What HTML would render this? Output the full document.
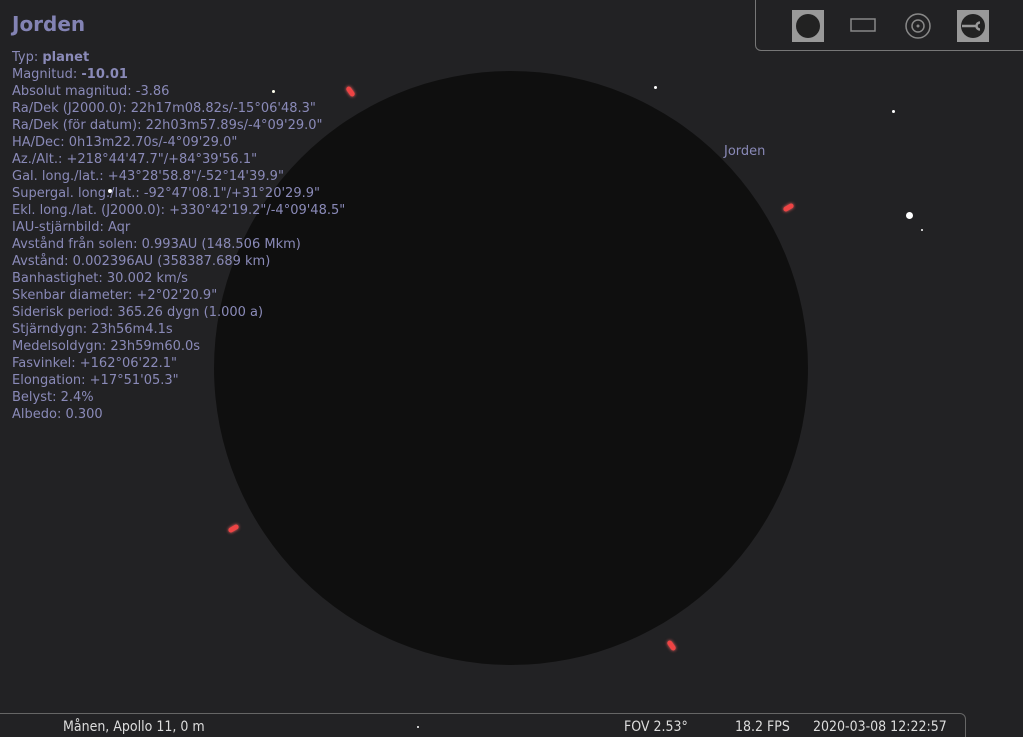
<!DOCTYPE html>
<html><head><meta charset="utf-8"><style>
html,body{margin:0;width:1023px;height:737px;overflow:hidden;}
body{background:#222224;position:relative;font-family:"DejaVu Sans","Liberation Sans",sans-serif;}
.planet{position:absolute;left:214px;top:71px;width:594px;height:594px;border-radius:50%;background:radial-gradient(circle at 50% 50%,#0f0f0f 0%,#0f0f0f 90%,#121212 97%,#1a1a1a 100%);}
#info{position:absolute;left:12px;top:49px;color:#8a8ab8;font-size:13px;line-height:17px;white-space:pre;}
#title{position:absolute;left:12px;top:12px;color:#8383b4;font-size:20px;font-weight:bold;}
.star{position:absolute;background:#fff;border-radius:50%;}
.red{position:absolute;width:5px;height:11px;background:#e44;border-radius:3px;box-shadow:0 0 3px #f66;}
#tb{position:absolute;left:755px;top:-2px;width:280px;height:51px;border:1px solid #777;border-radius:0 0 0 6px;}
#bb{position:absolute;left:-2px;top:713px;width:966px;height:30px;border:1px solid #666;border-radius:0 6px 0 0;color:#ddd;font-family:"DejaVu Sans Condensed","DejaVu Sans",sans-serif;font-size:14px;}
#bb span{position:absolute;top:5px;}
</style></head><body>
<div class="planet"></div>
<div id="title">Jorden</div>
<div id="info">Typ: <b>planet</b>
Magnitud: <b>-10.01</b>
Absolut magnitud: -3.86
Ra/Dek (J2000.0): 22h17m08.82s/-15°06'48.3"
Ra/Dek (för datum): 22h03m57.89s/-4°09'29.0"
HA/Dec: 0h13m22.70s/-4°09'29.0"
Az./Alt.: +218°44'47.7"/+84°39'56.1"
Gal. long./lat.: +43°28'58.8"/-52°14'39.9"
Supergal. long./lat.: -92°47'08.1"/+31°20'29.9"
Ekl. long./lat. (J2000.0): +330°42'19.2"/-4°09'48.5"
IAU-stjärnbild: Aqr
Avstånd från solen: 0.993AU (148.506 Mkm)
Avstånd: 0.002396AU (358387.689 km)
Banhastighet: 30.002 km/s
Skenbar diameter: +2°02'20.9"
Siderisk period: 365.26 dygn (1.000 a)
Stjärndygn: 23h56m4.1s
Medelsoldygn: 23h59m60.0s
Fasvinkel: +162°06'22.1"
Elongation: +17°51'05.3"
Belyst: 2.4%
Albedo: 0.300</div>
<div style="position:absolute;left:724px;top:144px;color:#8a8ab8;font-size:13px;">Jorden</div>
<div class="star" style="left:272px;top:90px;width:3px;height:3px;background:#ffe"></div>
<div class="star" style="left:108px;top:189px;width:4px;height:4px"></div>
<div class="star" style="left:654px;top:86px;width:3px;height:3px"></div>
<div class="star" style="left:892px;top:110px;width:3px;height:3px"></div>
<div class="star" style="left:906px;top:212px;width:7px;height:7px"></div>
<div class="star" style="left:921px;top:229px;width:2px;height:2px"></div>
<div class="star" style="left:417px;top:726px;width:2px;height:2px"></div>
<div class="red" style="left:348px;top:86px;transform:rotate(-35deg)"></div>
<div class="red" style="left:786px;top:202px;transform:rotate(60deg)"></div>
<div class="red" style="left:231px;top:523px;transform:rotate(60deg)"></div>
<div class="red" style="left:669px;top:640px;transform:rotate(-35deg)"></div>
<div id="tb">
<svg width="280" height="51" style="position:absolute;left:0;top:0">
<rect x="36" y="11" width="32" height="32" fill="#999"/><circle cx="52" cy="27" r="12" fill="#222"/>
<rect x="95" y="20" width="24" height="12" fill="none" stroke="#888" stroke-width="1.5"/>
<circle cx="162" cy="27" r="12" fill="none" stroke="#888" stroke-width="1.5"/><circle cx="162" cy="27" r="6" fill="none" stroke="#888" stroke-width="1.5"/><circle cx="162" cy="27" r="1.5" fill="#888"/>
<rect x="201" y="11" width="32" height="32" fill="#999"/><circle cx="217" cy="27" r="12" fill="#222"/>
<path d="M206 27h14M224 23.5a3.5 3.5 0 1 0 0 7" stroke="#999" stroke-width="2.5" fill="none"/>
</svg></div>
<div id="bb"><span style="left:64px">Månen, Apollo 11, 0 m</span><span style="left:625px">FOV 2.53°</span><span style="left:736px">18.2 FPS</span><span style="left:814px">2020-03-08 12:22:57</span></div>
</body></html>
